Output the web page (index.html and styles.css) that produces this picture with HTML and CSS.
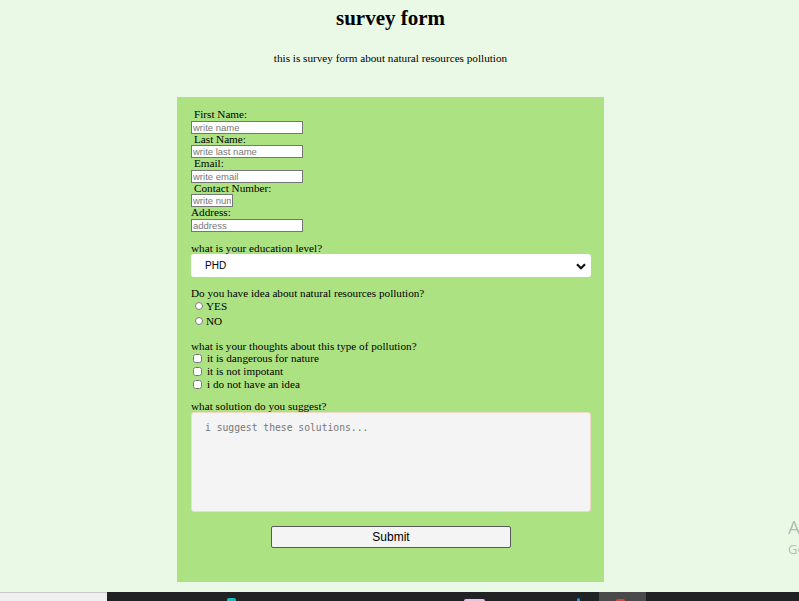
FILE: index.html
```html
<!DOCTYPE html>
<html lang="en">
<head>
<meta charset="utf-8">
<title>survey form</title>
<link rel="stylesheet" href="styles.css">
</head>
<body>
<div class="page">
  <h1 class="title">survey form</h1>
  <p class="subtitle">this is survey form about natural resources pollution</p>
  <form class="survey">
    <label class="lbl indent">First Name:</label>
    <input class="txt" type="text" placeholder="write name">
    <label class="lbl indent">Last Name:</label>
    <input class="txt" type="text" placeholder="write last name">
    <label class="lbl indent">Email:</label>
    <input class="txt" type="email" placeholder="write email">
    <label class="lbl indent">Contact Number:</label>
    <input class="txt short" type="text" placeholder="write number">
    <label class="lbl">Address:</label>
    <input class="txt" type="text" placeholder="address">

    <label class="lbl q q-first">what is your education level?</label>
    <div class="select-wrap">
      <select class="sel">
        <option>PHD</option>
        <option>Master</option>
        <option>Bachelor</option>
      </select>
      <svg class="chev" width="10" height="7" viewBox="0 0 10 7"><path d="M1 1.2 L5 5.2 L9 1.2" fill="none" stroke="#111" stroke-width="2.2"/></svg>
    </div>

    <label class="lbl q">Do you have idea about natural resources pollution?</label>
    <div class="radio-row"><input class="rad" type="radio" name="idea"><span>YES</span></div>
    <div class="radio-row"><input class="rad" type="radio" name="idea"><span>NO</span></div>

    <label class="lbl q q-mid">what is your thoughts about this type of pollution?</label>
    <div class="check-row"><input class="chk" type="checkbox"><span>it is dangerous for nature</span></div>
    <div class="check-row"><input class="chk" type="checkbox"><span>it is not impotant</span></div>
    <div class="check-row"><input class="chk" type="checkbox"><span>i do not have an idea</span></div>

    <label class="lbl q q-sol">what solution do you suggest?</label>
    <textarea class="area" placeholder="i suggest these solutions..."></textarea>

    <div class="submit-row"><button class="btn" type="button">Submit</button></div>
  </form>
</div>

<div class="watermark">
  <div class="wm-big">Activate Windows</div>
  <div class="wm-small">Go to Settings to activate Windows.</div>
</div>

<div class="taskbar">
  <div class="tb-left"></div>
  <div class="tb-dark">
    <span class="tb-ico ico-cyan"></span>
    <span class="tb-ico ico-pink"></span>
    <span class="tb-ico ico-blue"></span>
    <span class="tb-active"><span class="tb-ico ico-red"></span></span>
  </div>
</div>
</body>
</html>
```
FILE: styles.css
```css
html, body {
  margin: 0;
  padding: 0;
  overflow: hidden;
}
body {
  background: #eaf9e6;
  font-family: "Liberation Serif", "Times New Roman", serif;
  font-size: 11.2px;
  color: #000;
  height: 601px;
}
.page {
  width: 781px;
  text-align: center;
}
.title {
  margin: 0;
  padding-top: 5px;
  font-size: 21px;
  line-height: 26px;
  font-weight: bold;
}
.subtitle {
  margin: 21px 0 0;
  line-height: 13px;
}
.survey {
  width: 427px;
  box-sizing: border-box;
  margin: 32px auto 0;
  background: #ade283;
  padding: 12px 13px 34px 14px;
  text-align: left;
}
.lbl {
  display: block;
  line-height: 11.5px;
  height: 11.5px;
}
.indent { padding-left: 3px; }
.txt {
  display: block;
  box-sizing: border-box;
  width: 112px;
  height: 13px;
  margin: 0;
  padding: 0 1px;
  border: 1px solid #767676;
  background: #fff;
  font-family: "Liberation Sans", Arial, sans-serif;
  font-size: 9.5px;
  color: #000;
  outline: none;
}
.txt::placeholder { color: #777; }
.short { width: 42px; }
.q { line-height: 12px; height: 12px; }
.q-first { margin-top: 10px; }
.select-wrap {
  position: relative;
  width: 400px;
  height: 23px;
}
.sel {
  appearance: none;
  -webkit-appearance: none;
  width: 400px;
  height: 23px;
  margin: 0;
  border: none;
  border-radius: 3px;
  background: #fff;
  padding: 0 0 0 14px;
  font-family: "Liberation Sans", Arial, sans-serif;
  font-size: 10px;
  color: #000;
}
.chev {
  position: absolute;
  right: 5px;
  top: 9px;
  pointer-events: none;
}
.q:not(.q-first) { margin-top: 10px; }
.radio-row, .check-row {
  display: flex;
  align-items: center;
  line-height: 12px;
}
.radio-row { height: 15px; }
.check-row { height: 13px; }
.rad {
  width: 8px;
  height: 8px;
  margin: 0 3px 0 4px;
}
.chk {
  width: 9px;
  height: 9px;
  margin: 0 5px 0 2px;
}
.q-mid { margin-top: 11px !important; }
.q-sol { margin-top: 9px !important; }
.area {
  display: block;
  box-sizing: border-box;
  width: 400px;
  height: 100px;
  margin: 0;
  resize: none;
  border: 1px solid #efd9c9;
  border-radius: 3px;
  background: #f4f4f4;
  padding: 8px 13px;
  font-family: "DejaVu Sans Mono", "Liberation Mono", monospace;
  font-size: 9.7px;
  line-height: 14px;
}
.area::placeholder { color: #777; }
.submit-row {
  display: flex;
  justify-content: center;
  margin-top: 14px;
}
.btn {
  width: 240px;
  height: 22px;
  margin: 0;
  background: #f4f4f4;
  border: 1px solid #5a5a5a;
  border-radius: 2px;
  font-family: "Liberation Sans", Arial, sans-serif;
  font-size: 12px;
  color: #000;
}
.watermark {
  position: fixed;
  left: 788px;
  top: 514px;
  white-space: nowrap;
  font-family: "Open Sans", "DejaVu Sans", sans-serif;
  color: #b3bab2;
}
.wm-big { font-size: 19px; line-height: 26px; }
.wm-small { font-size: 13px; line-height: 18px; }
.taskbar {
  position: fixed;
  left: 0;
  top: 592px;
  width: 799px;
  height: 9px;
  display: flex;
}
.tb-left {
  width: 107px;
  background: #efefef;
  border-top: 1px solid #c8c8c8;
  box-sizing: border-box;
}
.tb-dark {
  flex: 1;
  background: #202224;
  position: relative;
}
.tb-ico {
  position: absolute;
  top: 6px;
  height: 3px;
  border-radius: 2px 2px 0 0;
}
.ico-cyan { left: 120px; width: 9px; background: #1fb8c9; }
.ico-pink { left: 357px; width: 21px; top: 7px; background: #e3c4e8; }
.ico-blue { left: 470px; width: 3px; background: #2a8fd6; }
.tb-active {
  position: absolute;
  left: 492px;
  top: 0;
  width: 47px;
  height: 9px;
  background: #4a4a4a;
}
.ico-red { left: 17px; width: 9px; top: 7px; background: #e0433a; }
```
